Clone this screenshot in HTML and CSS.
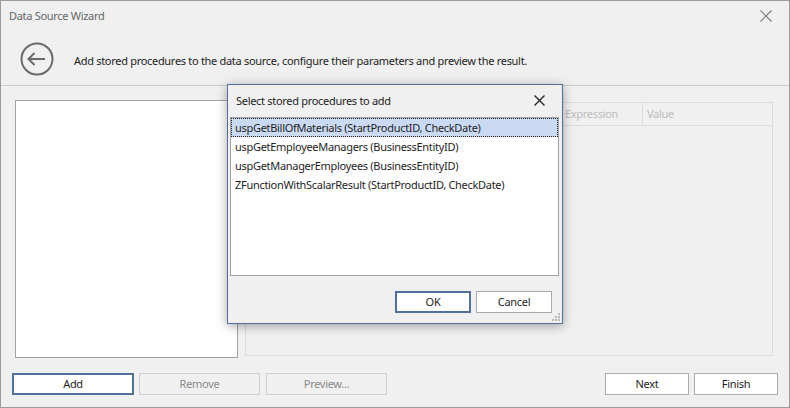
FILE: index.html
```html
<!DOCTYPE html>
<html>
<head>
<meta charset="utf-8">
<link rel="stylesheet" href="styles.css">
</head>
<body>
<div class="window">
  <div class="titlebar">
    <span class="title">Data Source Wizard</span>
    <svg class="win-close" width="12" height="12" viewBox="0 0 12 12"><path d="M0.5 0.5 L11.5 11.5 M11.5 0.5 L0.5 11.5" stroke="#7a7a7a" stroke-width="1.1" fill="none"/></svg>
  </div>
  <div class="header">
    <svg class="back" width="34" height="34" viewBox="0 0 34 34"><circle cx="17" cy="17" r="15.5" stroke="#6a6a6a" stroke-width="2" fill="none"/><path d="M25 17 H8.5 M14.5 11 L8.5 17 L14.5 23" stroke="#6a6a6a" stroke-width="2" fill="none"/></svg>
    <span class="heading">Add stored procedures to the data source, configure their parameters and preview the result.</span>
  </div>
  <div class="content">
    <div class="proc-list"></div>
    <div class="params">
      <div class="grid-head">
        <div class="col c-name"></div>
        <div class="col c-type"></div>
        <div class="col c-expr">Expression</div>
        <div class="col c-val">Value</div>
      </div>
    </div>
  </div>
  <div class="footer">
    <button class="btn focused b-add">Add</button>
    <button class="btn disabled b-remove">Remove</button>
    <button class="btn disabled b-preview">Preview...</button>
    <button class="btn b-next">Next</button>
    <button class="btn b-finish">Finish</button>
  </div>

  <div class="dialog">
    <div class="dlg-title">
      <span>Select stored procedures to add</span>
      <svg class="dlg-close" width="11" height="11" viewBox="0 0 11 11"><path d="M0.5 0.5 L10.5 10.5 M10.5 0.5 L0.5 10.5" stroke="#262626" stroke-width="1.4" fill="none"/></svg>
    </div>
    <div class="dlg-list">
      <div class="item selected">uspGetBillOfMaterials (StartProductID, CheckDate)</div>
      <div class="item">uspGetEmployeeManagers (BusinessEntityID)</div>
      <div class="item">uspGetManagerEmployees (BusinessEntityID)</div>
      <div class="item">ZFunctionWithScalarResult (StartProductID, CheckDate)</div>
    </div>
    <div class="dlg-buttons">
      <button class="btn focused b-ok">OK</button>
      <button class="btn b-cancel">Cancel</button>
    </div>
    <svg class="grip" width="8" height="8" viewBox="0 0 8 8"><g fill="#b8b8b8"><rect x="6" y="0" width="2" height="2"/><rect x="3" y="3" width="2" height="2"/><rect x="6" y="3" width="2" height="2"/><rect x="0" y="6" width="2" height="2"/><rect x="3" y="6" width="2" height="2"/><rect x="6" y="6" width="2" height="2"/></g></svg>
  </div>
</div>
</body>
</html>
```

FILE: styles.css
```css
* { box-sizing: border-box; }
html, body { margin: 0; padding: 0; }
body {
  font-family: "Noto Sans", "Liberation Sans", sans-serif;
  font-size: 11px;
  letter-spacing: -0.3px;
  color: #222;
  background: #f0f0f0;
}
.window {
  position: relative;
  width: 790px;
  height: 408px;
  border: 1px solid #9c9c9c;
  background: #f0f0f0;
  display: flex;
  flex-direction: column;
}
.titlebar {
  height: 31px;
  display: flex;
  align-items: center;
  padding-left: 8px;
  padding-right: 17px;
  padding-bottom: 2px;
}
.title { color: #666; flex: 1; }
.win-close { display: block; }
.header {
  height: 54px;
  border-bottom: 1px solid #cacaca;
  display: flex;
  align-items: center;
  padding-left: 19px;
}
.back { display: block; margin-right: 20px; }
.heading { color: #1e1e1e; padding-top: 3px; }
.content {
  display: flex;
  margin-top: 14px;
  padding-left: 14px;
  height: 258px;
}
.proc-list {
  width: 223px;
  height: 258px;
  background: #fff;
  border: 1px solid #a3a3a3;
}
.params {
  margin-left: 7px;
  margin-top: 2px;
  width: 528px;
  height: 254px;
  border: 1px solid #dcdcdc;
}
.grid-head {
  display: flex;
  height: 23px;
  border-bottom: 1px solid #dcdcdc;
}
.col {
  color: #bcbcbc;
  padding-left: 3px;
  line-height: 22px;
  border-right: 1px solid #dcdcdc;
}
.c-name { width: 158px; }
.c-type { width: 158px; }
.c-expr { width: 81px; }
.c-val { flex: 1; border-right: none; padding-left: 4px; }
.footer {
  display: flex;
  margin-top: 15px;
  padding-left: 11px;
  padding-right: 11px;
}
.btn {
  font-family: inherit;
  font-size: 11px;
  letter-spacing: -0.3px;
  height: 22px;
  background: #fff;
  border: 1px solid #ababab;
  color: #1e1e1e;
  padding: 0 0 1px 0;
  margin: 0;
}
.btn.focused { border: 2px solid #52709c; }
.btn.disabled { background: #f0f0f0; border-color: #cfcfcf; color: #8a8a8a; }
.b-add { width: 122px; }
.b-remove { width: 121px; margin-left: 5px; }
.b-preview { width: 121px; margin-left: 6px; }
.b-next { width: 84px; margin-left: auto; }
.b-finish { width: 84px; margin-left: 5px; }

.dialog {
  position: absolute;
  left: 226px;
  top: 83px;
  width: 336px;
  height: 240px;
  background: #f0f0f0;
  border: 1px solid #50709c;
  box-shadow: 0 2px 10px rgba(0,0,0,0.35);
  display: flex;
  flex-direction: column;
}
.dlg-title {
  height: 32px;
  display: flex;
  align-items: center;
  justify-content: space-between;
  padding-left: 8px;
  padding-right: 17px;
  padding-bottom: 2px;
  color: #1e1e1e;
}
.dlg-close { display: block; }
.dlg-list {
  margin-left: 2px;
  width: 329px;
  height: 159px;
  background: #fff;
  border: 1px solid #a3a3a3;
}
.item {
  height: 19px;
  line-height: 18px;
  padding-left: 3px;
  color: #1e1e1e;
  border: 1px solid transparent;
}
.item.selected {
  background: #cbdaf3;
  border: 1px dotted #222;
}
.dlg-buttons {
  display: flex;
  justify-content: flex-end;
  margin-top: 15px;
  padding-right: 10px;
}
.b-ok { width: 76px; }
.b-cancel { width: 76px; margin-left: 5px; }
.grip {
  position: absolute;
  right: 2px;
  bottom: 2px;
}
```
